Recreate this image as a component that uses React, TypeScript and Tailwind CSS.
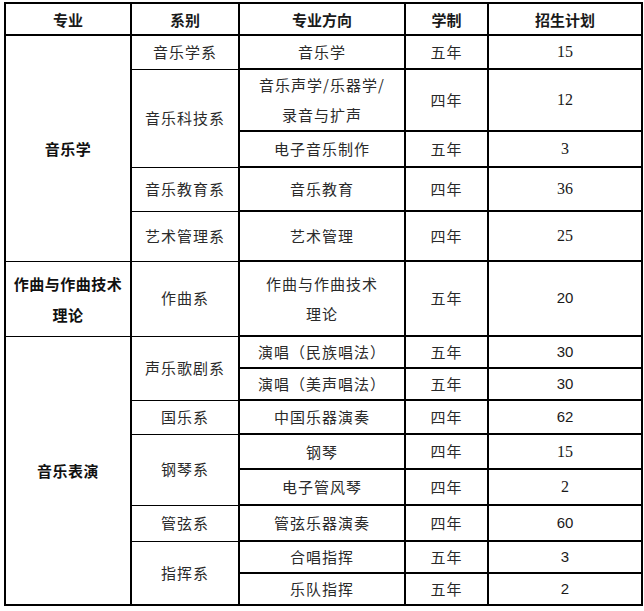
import React from "react"

type Row = {
  h: number
  major?: { text: string[]; span: number }
  dept?: { text: string; span: number }
  dir: string[]
  years: string
  plan: string
  serif?: boolean
}

const ROWS: Row[] = [
  { h: 34, major: { text: ["音乐学"], span: 5 }, dept: { text: "音乐学系", span: 1 }, dir: ["音乐学"], years: "五年", plan: "15", serif: true },
  { h: 62, dept: { text: "音乐科技系", span: 2 }, dir: ["音乐声学/乐器学/", "录音与扩声"], years: "四年", plan: "12", serif: true },
  { h: 36, dir: ["电子音乐制作"], years: "五年", plan: "3", serif: true },
  { h: 44, dept: { text: "音乐教育系", span: 1 }, dir: ["音乐教育"], years: "四年", plan: "36", serif: true },
  { h: 50, dept: { text: "艺术管理系", span: 1 }, dir: ["艺术管理"], years: "四年", plan: "25", serif: true },
  { h: 75, major: { text: ["作曲与作曲技术", "理论"], span: 1 }, dept: { text: "作曲系", span: 1 }, dir: ["作曲与作曲技术", "理论"], years: "五年", plan: "20" },
  { h: 31, major: { text: ["音乐表演"], span: 9 }, dept: { text: "声乐歌剧系", span: 2 }, dir: ["演唱（民族唱法）"], years: "五年", plan: "30" },
  { h: 32, dir: ["演唱（美声唱法）"], years: "五年", plan: "30" },
  { h: 34, dept: { text: "国乐系", span: 1 }, dir: ["中国乐器演奏"], years: "四年", plan: "62" },
  { h: 35, dept: { text: "钢琴系", span: 2 }, dir: ["钢琴"], years: "四年", plan: "15", serif: true },
  { h: 36, dir: ["电子管风琴"], years: "四年", plan: "2", serif: true },
  { h: 36, dept: { text: "管弦系", span: 1 }, dir: ["管弦乐器演奏"], years: "四年", plan: "60" },
  { h: 32, dept: { text: "指挥系", span: 2 }, dir: ["合唱指挥"], years: "五年", plan: "3" },
  { h: 32, dir: ["乐队指挥"], years: "五年", plan: "2" },
]

const cjk = "font-['Noto_Sans_CJK_SC',sans-serif]"
const body = `${cjk} text-[15px] tracking-[1px] text-[#2a2a2a] font-normal`
const thin = "border-x-2 border-y border-black"
const thick = "border-2 border-black"

export default function App() {
  return (
    <div className="bg-white w-[644px] h-[611px] pt-[2px] pl-[4px]">
      <table className="table-fixed border-collapse w-[637px] border-2 border-black">
        <colgroup>
          <col className="w-[126px]" />
          <col className="w-[108px]" />
          <col className="w-[166px]" />
          <col className="w-[83px]" />
          <col className="w-[154px]" />
        </colgroup>
        <thead>
          <tr className="h-[32px]">
            {["专业", "系别", "专业方向", "学制", "招生计划"].map((t) => (
              <th
                key={t}
                className={`${thick} ${cjk} text-[15px] font-bold text-[#1a1a1a] text-center align-middle p-0 leading-none`}
              >
                {t}
              </th>
            ))}
          </tr>
        </thead>
        <tbody>
          {ROWS.map((r, i) => (
            <tr key={i} style={{ height: r.h }}>
              {r.major && (
                <td
                  rowSpan={r.major.span}
                  className={`${thin} ${cjk} text-[15px] tracking-[0.5px] font-bold text-[#111] text-center align-middle p-0 leading-[31px]`}
                >
                  {r.major.text.map((t) => (
                    <div key={t}>{t}</div>
                  ))}
                </td>
              )}
              {r.dept && (
                <td
                  rowSpan={r.dept.span}
                  className={`${thin} ${body} text-center align-middle p-0`}
                >
                  {r.dept.text}
                </td>
              )}
              <td className={`${thick} ${body} text-center align-middle p-0 leading-[30px]`}>
                {r.dir.map((t) => (
                  <div key={t}>{t}</div>
                ))}
              </td>
              <td className={`${thick} ${body} text-center align-middle p-0`}>{r.years}</td>
              <td
                className={`${thick} text-center align-middle p-0 text-[#1a1a1a] ${
                  r.serif
                    ? "font-['Liberation_Serif',serif] text-[16px]"
                    : "font-['Liberation_Sans',sans-serif] text-[15px]"
                }`}
              >
                {r.plan}
              </td>
            </tr>
          ))}
        </tbody>
      </table>
    </div>
  )
}
